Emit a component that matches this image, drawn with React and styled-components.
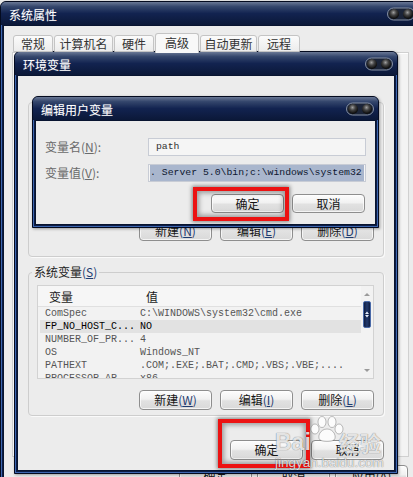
import React from "react";
import styled, { createGlobalStyle } from "styled-components";

const UI = `"Noto Sans CJK SC", "Liberation Sans", sans-serif`;
const MONO = `"Liberation Mono", "Noto Sans CJK SC", monospace`;

const GlobalStyle = createGlobalStyle`
  html, body {
    margin: 0;
    padding: 0;
    background: #e9e9e9;
    overflow: hidden;
  }
  body {
    font-family: ${UI};
    font-size: 12px;
  }
`;

const Screen = styled.div`
  position: relative;
  width: 413px;
  height: 477px;
  overflow: hidden;
  background: #e9e9e9;
`;

// windows sit on the screen like on a desktop, so they get coordinates
const Window = styled.div`
  position: absolute;
  left: ${(p) => p.$x}px;
  top: ${(p) => p.$y}px;
  width: ${(p) => p.$w}px;
  height: ${(p) => p.$h}px;
  box-sizing: border-box;
  display: flex;
  flex-direction: column;
  background: #0d1d44;
  border: 1px solid #040b20;
  border-radius: 6px 6px 0 0;
  box-shadow: inset 1px 0 0 #3d66b0, inset -1px 0 0 #3d66b0,
    inset 0 -1px 0 #3d66b0, 1px 1px 3px rgba(0, 0, 0, 0.35);
  overflow: hidden;
`;

const TitleBar = styled.div`
  flex: 0 0 21px;
  display: flex;
  align-items: center;
  justify-content: space-between;
  padding: 0 4px 0 8px;
  background: linear-gradient(
    #6a7895 0%,
    #34466c 20%,
    #122350 50%,
    #0b1838 100%
  );
  color: #fff;
  font-family: ${UI};
  font-size: 12px;
  line-height: 21px;
  text-shadow: 0 0 1px rgba(255, 255, 255, 0.3);

  span {
    padding-top: 2px;
  }
`;

const ClientArea = styled.div`
  flex: 1;
  margin: 0 2px 2px;
  background: #ececec;
  border: 1px solid #081430;
  display: flex;
  flex-direction: column;
  padding: ${(p) => p.$pad};
  min-height: 0;
`;

const TabStrip = styled.div`
  display: flex;
  align-items: flex-end;
  gap: 1px;
  height: 19px;
  padding-left: 1px;
  position: relative;
  z-index: 1;
`;

const Tab = styled.div`
  width: ${(p) => p.$w}px;
  height: ${(p) => (p.$active ? 20 : 17)}px;
  box-sizing: border-box;
  border: 1px solid #c4c4c4;
  border-bottom: ${(p) => (p.$active ? "none" : "1px solid #c4c4c4")};
  border-radius: 3px 3px 0 0;
  background: ${(p) =>
    p.$active ? "#f8f8f8" : "linear-gradient(#fbfbfb, #ececec)"};
  color: #333;
  font-size: 12px;
  line-height: ${(p) => (p.$active ? 17 : 15)}px;
  text-align: center;
  margin-bottom: ${(p) => (p.$active ? -1 : 0)}px;
`;

const TabPanel = styled.div`
  height: 405px;
  box-sizing: border-box;
  margin-right: 7px;
  border: 1px solid #d0d0d0;
  background: #f3f3f3;
  box-shadow: inset 1px 1px 0 #fff;
`;

const ButtonRow = styled.div`
  display: flex;
  justify-content: flex-end;
  gap: ${(p) => p.$gap || 8}px;
  margin-top: ${(p) => p.$top}px;
  padding-right: ${(p) => p.$right || 0}px;
`;

const Button = styled.button`
  width: 73px;
  height: ${(p) => p.$h || 20}px;
  padding: 0;
  box-sizing: border-box;
  border: 1px solid #8e8e8e;
  border-radius: 4px;
  background: linear-gradient(#fdfdfd 0%, #f1f1f1 45%, #e1e1e1 55%, #d9d9d9 100%);
  box-shadow: inset 0 0 0 1px rgba(255, 255, 255, 0.7);
  font-family: ${UI};
  font-size: 12px;
  line-height: 16px;
  color: #151515;
  flex-shrink: 0;
`;

const Key = styled.span`
  color: #1f3c70;
  u {
    text-underline-offset: 1px;
  }
`;

const Group = styled.fieldset`
  margin: ${(p) => p.$top}px 0 0;
  padding: 5px 9px ${(p) => p.$bottom}px 8px;
  border: 1px solid #cdcdcd;
  border-radius: 4px;
  box-shadow: 1px 1px 0 #fafafa;
  min-width: 0;
  display: flex;
  flex-direction: column;
`;

const Legend = styled.legend`
  margin-left: -5px;
  padding: 0 2px;
  font-size: 12px;
  line-height: 16px;
  color: #222;
`;

const VarList = styled.div`
  height: ${(p) => p.$h}px;
  box-sizing: border-box;
  border: 1px solid #d2d2d2;
  background: #f2f2f2;
  display: flex;
  overflow: hidden;
`;

const ListBody = styled.div`
  flex: 1;
  min-width: 0;
`;

const ListHeader = styled.div`
  height: 21px;
  box-sizing: border-box;
  display: grid;
  grid-template-columns: 97px 1fr;
  padding-left: 11px;
  align-items: center;
  background: #f6f6f6;
  border-bottom: 1px solid #e0e0e0;
  font-size: 12px;
  color: #1a1a1a;
`;

const Row = styled.div`
  height: 13px;
  margin-left: 2px;
  display: grid;
  grid-template-columns: 95px 1fr;
  padding-left: 5px;
  font-family: ${MONO};
  font-size: 10px;
  line-height: 13px;
  white-space: nowrap;
  color: ${(p) => (p.$selected ? "#000" : "#555")};
  background: ${(p) => (p.$selected ? "#e2e2e2" : "transparent")};
`;

const ScrollTrack = styled.div`
  width: 12px;
  display: flex;
  flex-direction: column;
  align-items: center;
  padding-top: 7px;
`;

const Arrow = styled.div`
  width: 0;
  height: 0;
  border-left: 3px solid transparent;
  border-right: 3px solid transparent;
  ${(p) =>
    p.$down
      ? "border-top: 3px solid #9a9a9a; margin-top: auto; margin-bottom: 6px;"
      : "border-bottom: 3px solid #9a9a9a;"}
`;

const Thumb = styled.div`
  width: 8px;
  height: 27px;
  margin-top: 5px;
  box-sizing: border-box;
  border: 1px solid #4a6aa8;
  border-radius: 2px;
  background: linear-gradient(90deg, #0e1c40, #233a6c, #0e1c40);
  display: flex;
  align-items: center;
  justify-content: center;
`;

const FormRow = styled.div`
  display: flex;
  align-items: center;
  margin-top: ${(p) => p.$top}px;
`;

const Label = styled.div`
  width: 103px;
  flex-shrink: 0;
  font-size: 12px;
  color: #6a6a6a;
  line-height: 18px;
`;

const Field = styled.div`
  flex: 1;
  height: 18px;
  box-sizing: border-box;
  border: 1px solid #c8ccd5;
  background: #f5f5f5;
  padding: 0 1px;
  font-family: ${MONO};
  font-size: 9.8px;
  line-height: 16px;
  color: #333;
  white-space: nowrap;
  overflow: hidden;
`;

const Selection = styled.span`
  display: block;
  background: #a9b6cd;
  color: #0e1730;
`;

const Highlight = styled.div`
  position: absolute;
  left: ${(p) => p.$x}px;
  top: ${(p) => p.$y}px;
  width: ${(p) => p.$w}px;
  height: ${(p) => p.$h}px;
  box-sizing: border-box;
  border: 4px solid #ec1212;
  box-shadow: 0 0 4px 1px rgba(0, 0, 0, 0.45),
    inset 0 0 5px 2px rgba(0, 0, 0, 0.35);
  pointer-events: none;
`;

const Watermark = styled.div`
  position: absolute;
  left: 275px;
  top: 416px;
  display: flex;
  flex-direction: column;
  color: rgba(255, 255, 255, 0.82);
  text-shadow: 0 0 1px rgba(0, 0, 0, 0.35), 0 0 1px rgba(0, 0, 0, 0.35);
  pointer-events: none;
`;

const MarkTop = styled.div`
  display: flex;
  align-items: flex-end;
  height: 38px;
`;

const MarkBig = styled.span`
  font-family: "Liberation Sans", sans-serif;
  font-weight: bold;
  font-size: 23px;
  line-height: 24px;
`;

const MarkCn = styled.span`
  font-family: ${UI};
  font-weight: bold;
  font-size: 21px;
  line-height: 24px;
  margin-left: -6px;
`;

const MarkUrl = styled.span`
  font-family: "Liberation Sans", sans-serif;
  font-size: 13.5px;
  line-height: 16px;
  margin-top: 1px;
`;

function TitleButtons() {
  return (
    <svg width="28" height="14" viewBox="0 0 28 14">
      <defs>
        <radialGradient id="ball" cx="45%" cy="35%" r="60%">
          <stop offset="0" stopColor="#a0a0a0" />
          <stop offset="0.45" stopColor="#454545" />
          <stop offset="1" stopColor="#0c0c0c" />
        </radialGradient>
      </defs>
      <rect x="0.5" y="1" width="27" height="12" rx="6" fill="#1b2438" stroke="#8690a2" />
      <circle cx="7" cy="7" r="5" fill="url(#ball)" />
      <circle cx="21" cy="7" r="5" fill="url(#ball)" />
    </svg>
  );
}

function Paw() {
  return (
    <svg width="36" height="26" viewBox="0 0 36 26" style={{ marginBottom: 12, marginLeft: -2 }}>
      <g fill="rgba(255,255,255,0.85)" stroke="rgba(0,0,0,0.25)" strokeWidth="1">
        <ellipse cx="6" cy="13" rx="4" ry="5" />
        <ellipse cx="13" cy="6" rx="4" ry="5.5" />
        <ellipse cx="23" cy="6" rx="4" ry="5.5" />
        <ellipse cx="30" cy="13" rx="4" ry="5" />
        <path d="M18 13 C 11 13 8 21 11 24 C 14 26 22 26 25 24 C 28 21 25 13 18 13 Z" />
      </g>
    </svg>
  );
}

function Mnemonic({ text, k }) {
  return (
    <>
      {text}
      <Key>
        (<u>{k}</u>)
      </Key>
    </>
  );
}

const tabs = [
  { label: "常规", w: 40 },
  { label: "计算机名", w: 59 },
  { label: "硬件", w: 40 },
  { label: "高级", w: 44, active: true },
  { label: "自动更新", w: 57 },
  { label: "远程", w: 42 },
];

const userVars = [
  { name: "PATH", value: "C:\\Program Files\\MySQL\\MySQL" },
  { name: "TEMP", value: "%USERPROFILE%\\Local Settings\\Temp" },
  { name: "TMP", value: "%USERPROFILE%\\Local Settings\\Temp" },
];

const systemVars = [
  { name: "ComSpec", value: "C:\\WINDOWS\\system32\\cmd.exe" },
  { name: "FP_NO_HOST_C...", value: "NO", selected: true },
  { name: "NUMBER_OF_PR...", value: "4" },
  { name: "OS", value: "Windows_NT" },
  { name: "PATHEXT", value: ".COM;.EXE;.BAT;.CMD;.VBS;.VBE;...." },
  { name: "PROCESSOR_AR...", value: "x86" },
];

function VariableList({ height, rows, thumb }) {
  return (
    <VarList $h={height}>
      <ListBody>
        <ListHeader>
          <span>变量</span>
          <span>值</span>
        </ListHeader>
        {rows.map((r) => (
          <Row key={r.name} $selected={r.selected}>
            <span>{r.name}</span>
            <span>{r.value}</span>
          </Row>
        ))}
      </ListBody>
      <ScrollTrack>
        {thumb && (
          <>
            <Arrow />
            <Thumb>
              <svg width="4" height="7" viewBox="0 0 4 7">
                <path d="M0 3 L2 0.5 L4 3 Z M0 4 L2 6.5 L4 4 Z" fill="#e8eefa" />
              </svg>
            </Thumb>
            <Arrow $down />
          </>
        )}
      </ScrollTrack>
    </VarList>
  );
}

export default function App() {
  return (
    <Screen>
      <GlobalStyle />

      <Window $x={0} $y={1} $w={420} $h={500}>
        <TitleBar>
          <span>系统属性</span>
          <TitleButtons />
        </TitleBar>
        <ClientArea $pad="7px 0 0 8px">
          <TabStrip>
            {tabs.map((t) => (
              <Tab key={t.label} $w={t.w} $active={t.active}>
                {t.label}
              </Tab>
            ))}
          </TabStrip>
          <TabPanel />
          <ButtonRow $top={8} $right={8} $gap={5}>
            <Button $h={21}>确定</Button>
            <Button $h={21}>取消</Button>
            <Button $h={21}>应用(A)</Button>
          </ButtonRow>
        </ClientArea>
      </Window>

      <Window $x={14} $y={51} $w={384} $h={423}>
        <TitleBar>
          <span>环境变量</span>
          <TitleButtons />
        </TitleBar>
        <ClientArea $pad="0 10px">
          <Group $top={18} $bottom={15}>
            <Legend>
              lu 的用户变量<Key>(<u>U</u>)</Key>
            </Legend>
            <VariableList height={95} rows={userVars} />
            <ButtonRow $top={11}>
              <Button>
                <Mnemonic text="新建" k="N" />
              </Button>
              <Button>
                <Mnemonic text="编辑" k="E" />
              </Button>
              <Button>
                <Mnemonic text="删除" k="D" />
              </Button>
            </ButtonRow>
          </Group>

          <Group $top={7} $bottom={5}>
            <Legend>
              系统变量<Key>(<u>S</u>)</Key>
            </Legend>
            <VariableList height={94} rows={systemVars} thumb />
            <ButtonRow $top={11}>
              <Button>
                <Mnemonic text="新建" k="W" />
              </Button>
              <Button>
                <Mnemonic text="编辑" k="I" />
              </Button>
              <Button>
                <Mnemonic text="删除" k="L" />
              </Button>
            </ButtonRow>
          </Group>

          <ButtonRow $top={24}>
            <Button>确定</Button>
            <Button>取消</Button>
          </ButtonRow>
        </ClientArea>
      </Window>

      <Window $x={32} $y={96} $w={347} $h={132}>
        <TitleBar>
          <span>编辑用户变量</span>
          <TitleButtons />
        </TitleBar>
        <ClientArea $pad="0 9px">
          <FormRow $top={17}>
            <Label>
              变量名(<u>N</u>):
            </Label>
            <Field>&nbsp;path</Field>
          </FormRow>
          <FormRow $top={8}>
            <Label>
              变量值(<u>V</u>):
            </Label>
            <Field>
              <Selection>. Server 5.0\bin;c:\windows\system32</Selection>
            </Field>
          </FormRow>
          <ButtonRow $top={12} $right={1}>
            <Button $h={19}>确定</Button>
            <Button $h={19}>取消</Button>
          </ButtonRow>
        </ClientArea>
      </Window>

      <Highlight $x={193} $y={187} $w={96} $h={34} />
      <Highlight $x={218} $y={419} $w={92} $h={49} />

      <Watermark>
        <MarkTop>
          <MarkBig>Bai</MarkBig>
          <Paw />
          <MarkCn>经验</MarkCn>
        </MarkTop>
        <MarkUrl>jingyan.baidu.com</MarkUrl>
      </Watermark>
    </Screen>
  );
}
